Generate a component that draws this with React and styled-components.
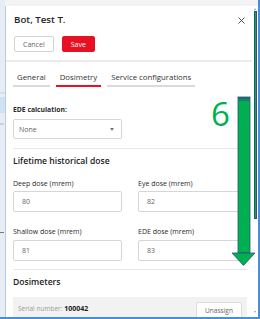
import React from 'react';
import styled, { createGlobalStyle } from 'styled-components';

const GlobalStyle = createGlobalStyle`
  html, body {
    margin: 0;
    padding: 0;
    background: #ffffff;
  }

  body {
    font-family: 'Open Sans', 'Noto Sans', sans-serif;
    color: #222;
  }

  * {
    box-sizing: border-box;
  }
`;

const doses = [
  { label: 'Deep dose (mrem)', value: '80' },
  { label: 'Eye dose (mrem)', value: '82' },
  { label: 'Shallow dose (mrem)', value: '81' },
  { label: 'EDE dose (mrem)', value: '83' },
];

const tabs = ['General', 'Dosimetry', 'Service configurations'];

const App = () => {
  return (
    <>
      <GlobalStyle />
      <Frame>
        <Peek>
          <PeekRow $top={92} $height={2} />
          <PeekRow $top={97} $height={16} />
          <PeekText>er</PeekText>
          <PeekDash />
        </Peek>

        <Drawer>
          <Header>
            <TitleRow>
              <Title>Bot, Test T.</Title>
              <Close aria-label="Close">
                <svg width="7" height="7" viewBox="0 0 7 7">
                  <path d="M0.5 0.5 L6.5 6.5 M6.5 0.5 L0.5 6.5" stroke="#444" strokeWidth="0.9" />
                </svg>
              </Close>
            </TitleRow>
            <Actions>
              <Button>Cancel</Button>
              <Button $primary>Save</Button>
            </Actions>
          </Header>

          <Body>
            <Tabs>
              {tabs.map((tab) => (
                <Tab key={tab} $active={tab === 'Dosimetry'}>
                  {tab}
                </Tab>
              ))}
            </Tabs>

            <FieldLabel $bold>EDE calculation:</FieldLabel>
            <Select>
              <span>None</span>
              <Caret />
            </Select>

            <Divider $top={9} />

            <Heading>Lifetime historical dose</Heading>
            <DoseGrid>
              {doses.map((dose) => (
                <Field key={dose.label}>
                  <FieldLabel>{dose.label}</FieldLabel>
                  <Input>{dose.value}</Input>
                </Field>
              ))}
            </DoseGrid>

            <Divider $top={8} />

            <Heading>Dosimeters</Heading>
            <Card>
              <Serial>
                Serial number: <strong>100042</strong>
              </Serial>
              <SmallButton>Unassign</SmallButton>
            </Card>
          </Body>
        </Drawer>

        <ScrollTrack>
          <ScrollArrow />
          <Thumb />
          <ScrollArrow $down />
        </ScrollTrack>

        {/* annotation drawn over the screenshot */}
        <StepNumber>6</StepNumber>
        <Arrow width="26" height="172" viewBox="231 95 26 172">
          <rect x="238" y="97" width="12" height="156" fill="#00b050" stroke="#2f4f7f" strokeWidth="0.8" />
          <rect x="238.4" y="97.4" width="11.2" height="1.4" fill="#2f4f7f" />
          <rect x="238.4" y="99.6" width="11.2" height="0.9" fill="#2f4f7f" />
          <polygon points="232,253 255,253 243.5,265.5" fill="#00b050" stroke="#2f4f7f" strokeWidth="0.8" />
        </Arrow>
      </Frame>
    </>
  );
};

const Frame = styled.div`
  position: relative;
  width: 260px;
  height: 319px;
  padding-top: 6px;

  display: flex;
  align-items: stretch;

  background: #f1f3f5;
  border-right: 2px solid #4a8fd6;
  border-bottom: 2px solid #4a8fd6;
  overflow: hidden;
`;

const Peek = styled.div`
  position: relative;
  width: 5px;
  flex-shrink: 0;
  margin-top: -6px;
  background: #e6edf4;
`;

const PeekRow = styled.div`
  position: absolute;
  left: 0;
  right: 0;
  top: ${(p) => p.$top}px;
  height: ${(p) => p.$height}px;
  background: #cfe1f2;
`;

const PeekText = styled.span`
  position: absolute;
  top: 121px;
  left: 0;
  font-size: 4px;
  line-height: 5px;
  color: #888;
`;

const PeekDash = styled.div`
  position: absolute;
  top: 232px;
  left: 0;
  width: 4px;
  height: 1px;
  background: #777;
`;

const Drawer = styled.section`
  width: 247px;
  flex-shrink: 0;

  display: flex;
  flex-direction: column;

  background: #fff;
  border-left: 1px solid #b7cce2;
`;

const Header = styled.header`
  padding: 8px 7px 8px 8px;
  border-bottom: 2px solid #ececec;
`;

const TitleRow = styled.div`
  display: flex;
  justify-content: space-between;
  align-items: flex-start;
`;

const Title = styled.h1`
  margin: 0;
  font-size: 9.7px;
  line-height: 12px;
  font-weight: 600;
  color: #1f1f1f;
`;

const Close = styled.button`
  width: 7px;
  height: 7px;
  margin-top: 3px;
  padding: 0;
  border: none;
  background: none;
  display: flex;
`;

const Actions = styled.div`
  margin-top: 10px;
  display: flex;
  gap: 8px;
`;

const Button = styled.button`
  height: 16px;
  padding: 0 8px;

  font-family: inherit;
  font-size: 7px;
  color: ${(p) => (p.$primary ? '#fff' : '#666')};

  background: ${(p) => (p.$primary ? '#e81123' : '#fff')};
  border: 1px solid ${(p) => (p.$primary ? '#e81123' : '#d4d4d4')};
  border-radius: 2px;
`;

const Body = styled.div`
  flex: 1;
  padding: 0 5px 0 7px;
  display: flex;
  flex-direction: column;
`;

const Tabs = styled.nav`
  margin-top: 9.5px;
  margin-bottom: 18px;
  display: flex;
  gap: 6px;
`;

const Tab = styled.div`
  padding: 0 4px 3.5px;

  font-size: 7.8px;
  line-height: 10px;
  color: #333;

  border-bottom: 2px solid ${(p) => (p.$active ? '#e81123' : '#dadada')};
`;

const FieldLabel = styled.label`
  display: block;
  font-size: 7px;
  line-height: 9px;
  font-weight: ${(p) => (p.$bold ? 700 : 500)};
  color: #2a2a2a;
  ${(p) => p.$bold && 'font-size: 6.8px;'}
`;

const Select = styled.div`
  width: 109px;
  height: 20px;
  margin-top: 5px;
  padding: 0 5px 0 5px;

  display: flex;
  align-items: center;
  justify-content: space-between;

  font-size: 7px;
  color: #666;

  border: 1px solid #d6d6d6;
  border-radius: 2px;
`;

const Caret = styled.span`
  width: 0;
  height: 0;
  margin-right: 2px;
  border-left: 2.5px solid transparent;
  border-right: 2.5px solid transparent;
  border-top: 3px solid #777;
`;

const Divider = styled.hr`
  width: 100%;
  height: 1px;
  margin: ${(p) => p.$top}px 0 0;
  border: none;
  background: #e6e6e6;
`;

const Heading = styled.h2`
  margin: 7px 0 0;
  font-size: 8.6px;
  line-height: 11px;
  font-weight: 600;
  color: #222;
`;

const DoseGrid = styled.div`
  margin-top: 11.5px;
  display: grid;
  grid-template-columns: 109px 109px;
  column-gap: 16px;
  row-gap: 15px;
`;

const Field = styled.div`
  display: flex;
  flex-direction: column;
  gap: 3.5px;
`;

const Input = styled.div`
  height: 21px;
  padding-left: 8px;

  display: flex;
  align-items: center;

  font-size: 7px;
  color: #666;

  border: 1px solid #d6d6d6;
  border-radius: 2px;
`;

const Card = styled.div`
  width: 234px;
  margin-top: 9.5px;
  padding: 4.5px 5px 6px 5px;

  display: flex;
  justify-content: space-between;
  align-items: flex-start;

  background: #f2f2f2;
`;

const Serial = styled.span`
  margin-top: 2px;
  font-size: 6.5px;
  line-height: 9px;
  color: #9a9a9a;

  strong {
    font-size: 7px;
    font-weight: 700;
    color: #222;
  }
`;

const SmallButton = styled.button`
  height: 18px;
  padding: 0 8px;

  font-family: inherit;
  font-size: 6.6px;
  color: #666;

  background: #fff;
  border: 1px solid #dcdcdc;
  border-radius: 2px;
`;

const ScrollTrack = styled.div`
  width: 6px;
  flex-shrink: 0;
  padding-top: 2px;

  display: flex;
  flex-direction: column;
  align-items: center;

  background: #fff;
`;

const ScrollArrow = styled.span`
  width: 0;
  height: 0;
  border-left: 1.5px solid transparent;
  border-right: 1.5px solid transparent;
  ${(p) =>
    p.$down
      ? 'border-top: 2px solid #999; margin-top: 92px;'
      : 'border-bottom: 2px solid #999;'}
`;

const Thumb = styled.div`
  width: 3px;
  height: 208px;
  margin-top: 0.5px;
  background: #00b050;
  border: 0.5px solid #2f4f7f;
`;

const StepNumber = styled.span`
  position: absolute;
  left: 211px;
  top: 97px;

  font-size: 33px;
  line-height: 33px;
  color: #00b050;
`;

const Arrow = styled.svg`
  position: absolute;
  left: 231px;
  top: 95px;
`;

export default App;
